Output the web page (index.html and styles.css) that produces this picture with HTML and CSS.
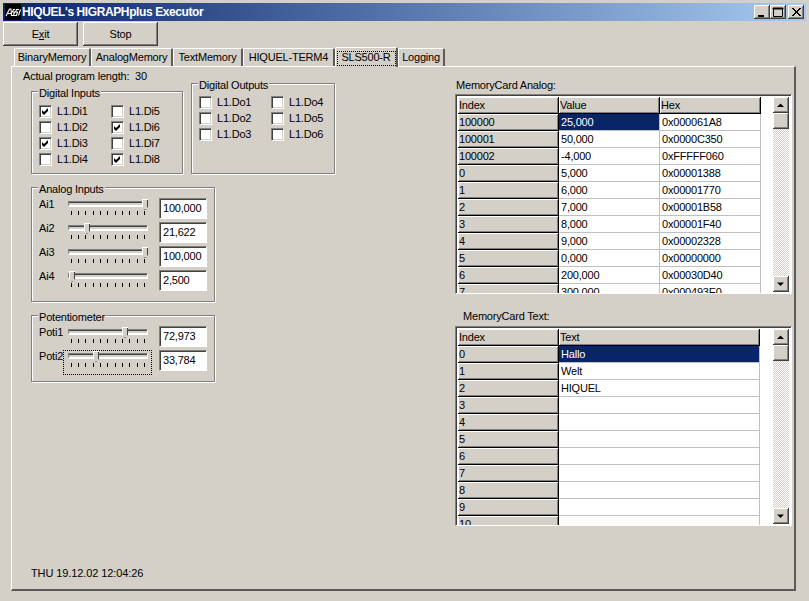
FILE: index.html
```html
<!DOCTYPE html>
<html lang="en">
<head>
<meta charset="utf-8">
<title>HIQUEL's HIGRAPHplus Executor</title>
<link rel="stylesheet" href="styles.css">
</head>
<body>
<div class="window">
  <div class="titlebar">
    <svg class="app-icon" width="16" height="16" viewBox="0 0 16 16"><rect width="16" height="16" fill="#000"/><path d="M1 12 4.500 5H6l.5 7M3 9.500h3.500M10 5.500H8.500L7.500 8H9.500L8.500 11.500H7M14 5.500h-2.500l-1 2.500h2l-1 3.500H9M15.500 5.500l-2 6" fill="none" stroke="#fff" stroke-width="1.100"/></svg>
    <span class="title-text">HIQUEL's HIGRAPHplus Executor</span>
    <div class="title-buttons">
      <span class="cap-btn"><svg width="14" height="12" viewBox="0 0 14 12"><rect x="3" y="9" width="6" height="2" fill="#000"/></svg></span>
      <span class="cap-btn"><svg width="14" height="12" viewBox="0 0 14 12"><path d="M2.500 2.500h9v8h-9z M2 2h10v1H2z" fill="none" stroke="#000"/></svg></span>
      <span class="cap-btn cap-close"><svg width="14" height="12" viewBox="0 0 14 12"><path d="M3 2l8 8M4 2l8 8M11 2l-8 8M12 2l-8 8" stroke="#000" fill="none"/></svg></span>
    </div>
  </div>
  <div class="toolbar">
    <button class="btn"><span>E<u>x</u>it</span></button>
    <button class="btn">Stop</button>
  </div>
  <div class="tabs">
    <span class="tab tab-1">BinaryMemory</span>
    <span class="tab tab-2">AnalogMemory</span>
    <span class="tab tab-3">TextMemory</span>
    <span class="tab tab-4">HIQUEL-TERM4</span>
    <span class="tab tab-5 active"><span class="focus">SLS500-R</span></span>
    <span class="tab tab-6">Logging</span>
  </div>
  <div class="panel">
    <div class="left">
      <div class="program">Actual program length:&nbsp; 30</div>
      <div class="io-row">
        <div class="group g-di">
          <span class="legend">Digital Inputs</span>
          <div class="checks">
            <label class="check"><span class="box on"></span>L1.Di1</label>
            <label class="check"><span class="box"></span>L1.Di5</label>
            <label class="check"><span class="box"></span>L1.Di2</label>
            <label class="check"><span class="box on"></span>L1.Di6</label>
            <label class="check"><span class="box on"></span>L1.Di3</label>
            <label class="check"><span class="box"></span>L1.Di7</label>
            <label class="check"><span class="box"></span>L1.Di4</label>
            <label class="check"><span class="box on"></span>L1.Di8</label>
          </div>
        </div>
        <div class="group g-do">
          <span class="legend">Digital Outputs</span>
          <div class="checks">
            <label class="check"><span class="box"></span>L1.Do1</label>
            <label class="check"><span class="box"></span>L1.Do4</label>
            <label class="check"><span class="box"></span>L1.Do2</label>
            <label class="check"><span class="box"></span>L1.Do5</label>
            <label class="check"><span class="box"></span>L1.Do3</label>
            <label class="check"><span class="box"></span>L1.Do6</label>
          </div>
        </div>
      </div>
      <div class="group g-ai">
        <span class="legend">Analog Inputs</span>
        <div class="srow"><span class="slabel">Ai1</span><div class="slider"><i class="track"></i><i class="thumb" style="left:74px"></i><div class="ticks"><i></i><i></i><i></i><i></i><i></i><i></i><i></i><i></i><i></i><i></i><i></i></div></div><span class="edit">100,000</span></div>
        <div class="srow"><span class="slabel">Ai2</span><div class="slider"><i class="track"></i><i class="thumb" style="left:16px"></i><div class="ticks"><i></i><i></i><i></i><i></i><i></i><i></i><i></i><i></i><i></i><i></i><i></i></div></div><span class="edit">21,622</span></div>
        <div class="srow"><span class="slabel">Ai3</span><div class="slider"><i class="track"></i><i class="thumb" style="left:74px"></i><div class="ticks"><i></i><i></i><i></i><i></i><i></i><i></i><i></i><i></i><i></i><i></i><i></i></div></div><span class="edit">100,000</span></div>
        <div class="srow"><span class="slabel">Ai4</span><div class="slider"><i class="track"></i><i class="thumb" style="left:1px"></i><div class="ticks"><i></i><i></i><i></i><i></i><i></i><i></i><i></i><i></i><i></i><i></i><i></i></div></div><span class="edit">2,500</span></div>
      </div>
      <div class="group g-pot">
        <span class="legend">Potentiometer</span>
        <div class="srow"><span class="slabel">Poti1</span><div class="slider"><i class="track"></i><i class="thumb" style="left:54px"></i><div class="ticks"><i></i><i></i><i></i><i></i><i></i><i></i><i></i><i></i><i></i><i></i><i></i></div></div><span class="edit">72,973</span></div>
        <div class="srow"><span class="slabel">Poti2</span><div class="slider focused"><i class="track"></i><i class="thumb" style="left:25px"></i><div class="ticks"><i></i><i></i><i></i><i></i><i></i><i></i><i></i><i></i><i></i><i></i><i></i></div></div><span class="edit">33,784</span></div>
      </div>
      <div class="status">THU 19.12.02 12:04:26</div>
    </div>
    <div class="right">
      <div class="grid-label">MemoryCard Analog:</div>
      <div class="gridbox">
        <table class="grid analog">
          <thead><tr><th class="c1">Index</th><th class="c2">Value</th><th class="c3">Hex</th></tr></thead>
          <tbody>
            <tr><th>100000</th><td class="sel">25,000</td><td>0x000061A8</td></tr>
            <tr><th>100001</th><td>50,000</td><td>0x0000C350</td></tr>
            <tr><th>100002</th><td>-4,000</td><td>0xFFFFF060</td></tr>
            <tr><th>0</th><td>5,000</td><td>0x00001388</td></tr>
            <tr><th>1</th><td>6,000</td><td>0x00001770</td></tr>
            <tr><th>2</th><td>7,000</td><td>0x00001B58</td></tr>
            <tr><th>3</th><td>8,000</td><td>0x00001F40</td></tr>
            <tr><th>4</th><td>9,000</td><td>0x00002328</td></tr>
            <tr><th>5</th><td>0,000</td><td>0x00000000</td></tr>
            <tr><th>6</th><td>200,000</td><td>0x00030D40</td></tr>
            <tr><th>7</th><td>300,000</td><td>0x000493E0</td></tr>
          </tbody>
        </table>
        <div class="scrollbar">
          <span class="sb-btn"><svg width="14" height="14" viewBox="0 0 14 14"><path d="M3 9h7L6.500 5.500z" fill="#000"/></svg></span>
          <span class="sb-btn"></span>
          <span class="sb-track"></span>
          <span class="sb-btn"><svg width="14" height="14" viewBox="0 0 14 14"><path d="M3 5.500h7L6.500 9z" fill="#000"/></svg></span>
        </div>
      </div>
      <div class="grid-label second">MemoryCard Text:</div>
      <div class="gridbox">
        <table class="grid text">
          <thead><tr><th class="c1">Index</th><th class="c4">Text</th></tr></thead>
          <tbody>
            <tr><th>0</th><td class="sel">Hallo</td></tr>
            <tr><th>1</th><td>Welt</td></tr>
            <tr><th>2</th><td>HIQUEL</td></tr>
            <tr><th>3</th><td></td></tr>
            <tr><th>4</th><td></td></tr>
            <tr><th>5</th><td></td></tr>
            <tr><th>6</th><td></td></tr>
            <tr><th>7</th><td></td></tr>
            <tr><th>8</th><td></td></tr>
            <tr><th>9</th><td></td></tr>
            <tr><th>10</th><td></td></tr>
          </tbody>
        </table>
        <div class="scrollbar">
          <span class="sb-btn"><svg width="14" height="14" viewBox="0 0 14 14"><path d="M3 9h7L6.500 5.500z" fill="#000"/></svg></span>
          <span class="sb-btn"></span>
          <span class="sb-track"></span>
          <span class="sb-btn"><svg width="14" height="14" viewBox="0 0 14 14"><path d="M3 5.500h7L6.500 9z" fill="#000"/></svg></span>
        </div>
      </div>
    </div>
  </div>
</div>
</body>
</html>
```
FILE: styles.css
```css
* { box-sizing: border-box; }
html, body { margin: 0; height: 100%; }
body {
  background: #d4d0c8;
  color: #000;
  font: 11px/13px "Liberation Sans", Arial, sans-serif;
  letter-spacing: -0.2px;
  overflow: hidden;
}
.window { width: 809px; height: 601px; padding: 3px 3px 0; }
.titlebar {
  display: flex; align-items: center; height: 18px; padding: 0 2px;
  background: linear-gradient(90deg, #0a246a, #a6caf0);
  color: #fff;
}
.app-icon { flex: none; margin-right: 1px; }
.title-text { font: bold 12px/18px "Liberation Sans", sans-serif; letter-spacing: -0.4px; }
.title-buttons { display: flex; margin-left: auto; }
.cap-btn {
  width: 16px; height: 14px; display: flex; align-items: center; justify-content: center;
  background: #d4d0c8;
  box-shadow: inset -1px -1px 0 #404040, inset 1px 1px 0 #fff, inset -2px -2px 0 #808080;
}
.cap-close { margin-left: 2px; }
.toolbar { display: flex; gap: 5px; margin-top: 1px; }
.btn {
  width: 75px; height: 24px; padding: 0; border: 0; font: inherit; letter-spacing: inherit; color: #000;
  background: #d4d0c8;
  box-shadow: inset -1px -1px 0 #404040, inset 1px 1px 0 #fff, inset -2px -2px 0 #808080;
}
.tabs { display: flex; align-items: flex-end; height: 20px; padding-left: 11px; position: relative; z-index: 1; }
.tab {
  height: 18px; display: flex; align-items: center; justify-content: center; white-space: nowrap;
  border-top: 1px solid #fff; border-left: 1px solid #fff; border-right: 2px solid #5a5a5a;
  border-radius: 2px 2px 0 0;
}
.tab-1 { width: 77px; }
.tab-2 { width: 82px; }
.tab-3 { width: 70px; }
.tab-4 { width: 92px; }
.tab-5 { width: 63px; }
.tab-6 { width: 47px; }
.tab.active { height: 20px; margin-bottom: -1px; background: #d4d0c8; align-items: flex-start; padding-top: 3px; }
.focus { display: block; width: 59px; height: 15px; outline: 1px dotted #000; outline-offset: -1px; text-align: center; line-height: 13px; }
.panel {
  display: flex; width: 785px; height: 525px; margin-left: 8px;
  border-top: 1px solid #fff; border-left: 1px solid #fff;
  border-right: 2px solid #5a5a5a; border-bottom: 2px solid #5a5a5a;
}
.left { width: 443px; height: 100%; padding-top: 3px; display: flex; flex-direction: column; flex: none; }
.program { margin-left: 11px; height: 13px; }
.io-row { display: flex; align-items: flex-end; gap: 8px; margin-left: 19px; }
.group {
  position: relative;
  border: 1px solid #808080;
  box-shadow: 1px 1px 0 #fff, inset 1px 1px 0 #fff;
}
.legend {
  position: absolute; top: -5px; left: 6px; padding: 0 1px; background: #d4d0c8; line-height: 13px;
}
.g-di { width: 152px; height: 83px; padding: 13px 0 0 7px; }
.g-do { width: 144px; height: 91px; padding: 12px 0 0 7px; }
.checks { display: grid; row-gap: 3px; grid-template-columns: 72px 60px; }
.check { display: flex; align-items: center; height: 13px; gap: 5px; padding-bottom: 0; }
.box {
  flex: none; width: 13px; height: 13px; position: relative; background: #fff;
  border-top: 1px solid #808080; border-left: 1px solid #808080;
  border-right: 1px solid #fff; border-bottom: 1px solid #fff;
  box-shadow: inset 1px 1px 0 #404040, inset -1px -1px 0 #d4d0c8;
}
.box.on::after {
  content: ""; position: absolute; inset: 0; background: #000;
  clip-path: polygon(2px 4px, 4px 6px, 8px 2px, 8px 5px, 4px 9px, 2px 7px);
}
.g-ai { width: 184px; height: 115px; margin: 13px 0 0 19px; padding: 10px 0 0 7px; }
.g-pot { width: 184px; height: 67px; margin: 13px 0 0 19px; padding: 10px 0 0 7px; }
.srow { display: flex; height: 21px; margin-bottom: 3px; align-items: flex-start; }
.slabel { width: 29px; flex: none; line-height: 13px; }
.slider { position: relative; width: 80px; height: 20px; flex: none; }
.slider.focused::before {
  content: ""; position: absolute; left: -5px; right: -4px; top: 0; bottom: -5px; border: 1px dotted #000;
}
.track {
  display: block; height: 6px; margin-top: 3px; background: #d4d0c8;
  border-top: 1px solid #808080; border-left: 1px solid #808080;
  border-right: 1px solid #fff; border-bottom: 2px solid #fff;
  box-shadow: inset 0 1px 0 #404040;
}
.thumb {
  position: absolute; top: 1px; width: 6px; height: 11px; background: #d4d0c8;
  clip-path: polygon(0 0, 100% 0, 100% 70%, 50% 100%, 0 70%);
  box-shadow: inset 1px 1px 0 #fff, inset -1px -1px 0 #404040;
}
.ticks { display: flex; justify-content: space-between; padding: 0 3px 0 2.500px; margin-top: 4px; }
.ticks i { display: block; width: 1px; height: 4px; background: #000; }
.edit {
  flex: none; width: 48px; height: 21px; margin-left: 11px; padding: 3px 0 0 3px; background: #fff;
  border-top: 1px solid #808080; border-left: 1px solid #808080;
  border-right: 1px solid #fff; border-bottom: 1px solid #fff;
  box-shadow: inset 1px 1px 0 #404040;
}
.status { margin: auto 0 9px 19px; letter-spacing: -0.1px; }
.right { width: 339px; flex: none; padding-top: 12px; }
.grid-label { margin-left: 1px; height: 15px; line-height: 13px; }
.grid-label.second { margin: 16px 0 0 8px; height: 16px; }
.gridbox {
  display: flex; width: 337px; height: 200px; background: #fff; overflow: hidden;
  padding: 2px 2px 0;
  border-top: 1px solid #808080; border-left: 1px solid #808080;
  border-right: 1px solid #fff; border-bottom: 1px solid #fff;
  box-shadow: inset 1px 1px 0 #404040;
}
.grid { border-collapse: separate; border-spacing: 0; table-layout: fixed; flex: none; align-self: flex-start; }
.grid.analog { width: 303px; }
.grid.text { width: 302px; }
.grid tr { height: 17px; }
.grid th {
  font-weight: normal; text-align: left; padding: 2px 0 0 1px; background: #d4d0c8; height: 17px;
  border-right: 1px solid #000; border-bottom: 1px solid #000;
  box-shadow: inset 1px 1px 0 #fff, inset -1px -1px 0 #808080;
  overflow: hidden; white-space: nowrap; vertical-align: top;
}
.grid td {
  padding: 2px 0 0 2px; height: 17px; vertical-align: top;
  border-right: 1px solid #c0c0c0; border-bottom: 1px solid #c0c0c0; white-space: nowrap;
}
.grid td.sel { background: #0a246a; color: #fff; }
.c1, .c2, .c3 { width: 101px; }
.c4 { width: 201px; }
.scrollbar {
  display: flex; flex-direction: column; width: 16px; height: 195px; margin-left: auto; flex: none; background: #fff;
}
.sb-btn {
  flex: none; width: 16px; height: 16px; display: flex; align-items: center; justify-content: center; background: #d4d0c8;
  box-shadow: inset -1px -1px 0 #404040, inset 1px 1px 0 #fff, inset -2px -2px 0 #808080;
}
.sb-track {
  flex: 1;
  background: repeating-conic-gradient(#d4d0c8 0 25%, #fff 0 50%) 0 0 / 2px 2px;
}
```
